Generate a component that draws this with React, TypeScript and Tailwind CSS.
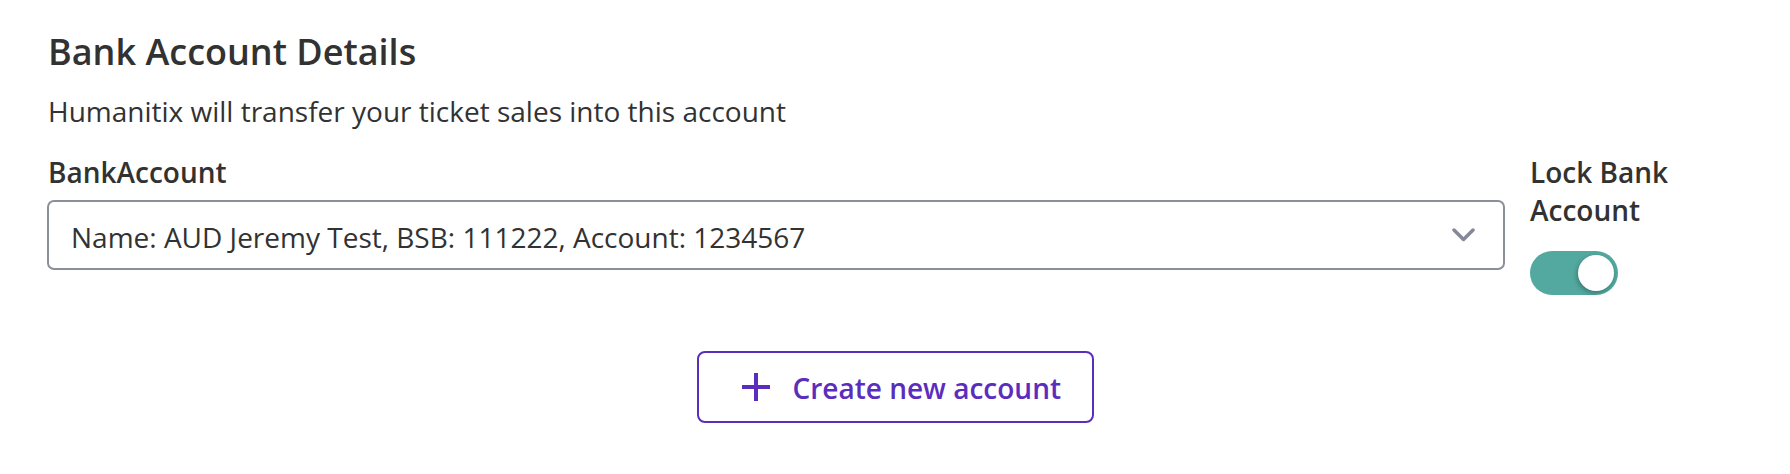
export default function App() {
  return (
    <div className="w-[1790px] h-[474px] bg-white text-[#323232] font-['Open_Sans',sans-serif]">
      <div className="pl-[47px] pr-[48px] pt-[28px]">
        <h2 className="pl-[1px] text-[36px] font-semibold leading-[48px]">Bank Account Details</h2>
        <p className="pl-[1px] mt-[15px] text-[28px] leading-[40px]">Humanitix will transfer your ticket sales into this account</p>

        <div className="mt-[22px] flex gap-[25px]">
          <div className="flex-1">
            <div className="pl-[1px] text-[28px] font-semibold leading-[38px]">BankAccount</div>
            <div className="mt-[9px] h-[70px] flex items-center justify-between border-2 border-[#8b8f9a] rounded-[7px] pl-[22px] pr-[28px]">
              <span className="text-[28px] leading-[40px] pt-[4px]">Name: AUD Jeremy Test, BSB: 111222, Account: 1234567</span>
              <svg width="23" height="14" viewBox="0 0 23 14" fill="none">
                <path d="M2 2l9.5 9.5L21 2" stroke="#858997" strokeWidth="3.5" strokeLinecap="round" strokeLinejoin="round" />
              </svg>
            </div>
          </div>
          <div className="w-[212px]">
            <div className="text-[28px] font-semibold leading-[38px]">Lock Bank Account</div>
            <div className="mt-[22px] w-[88px] h-[44px] rounded-full bg-[#53a99f] flex items-center justify-end pr-[4px]">
              <div className="w-[36px] h-[36px] rounded-full bg-white shadow-[-1px_2px_5px_rgba(0,0,0,0.3)]" />
            </div>
          </div>
        </div>

        <div className="mt-[56px] flex justify-center pl-[1px]">
          <button className="w-[397px] h-[72px] flex items-center gap-[23px] border-2 border-[#5b2dbd] rounded-[8px] pl-[43px] text-[#5b2dbd] text-[28px] font-semibold">
            <svg width="28" height="28" viewBox="0 0 28 28" fill="none">
              <path d="M14 0v28M0 14h28" stroke="#5b2dbd" strokeWidth="4" />
            </svg>
            <span className="pt-[2px]">Create new account</span>
          </button>
        </div>
      </div>
    </div>
  );
}
